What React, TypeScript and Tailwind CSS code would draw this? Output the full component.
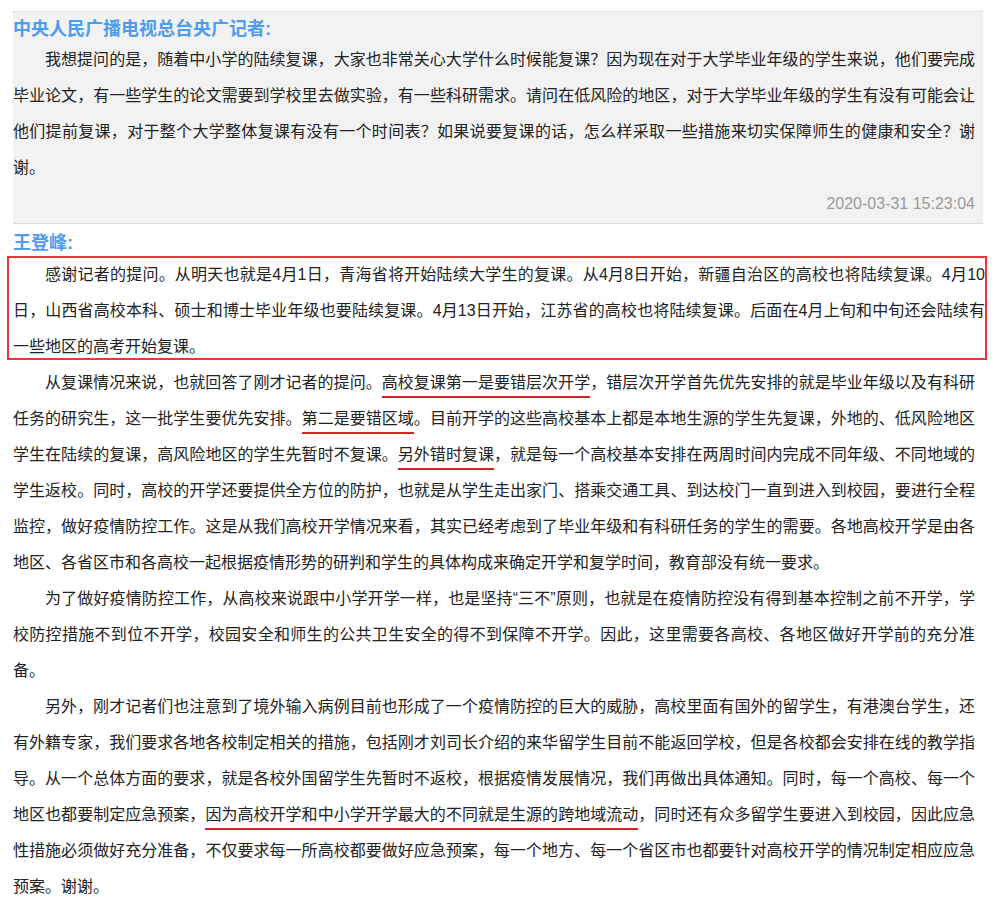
import * as React from 'react';

const U: React.FC<{ children: React.ReactNode }> = ({ children }) => (
  <span className="border-b-2 border-[#e02020] pb-[5px]">{children}</span>
);

const P: React.FC<{ children: React.ReactNode; className?: string }> = ({ children, className }) => (
  <p className={'indent-8 text-justify ' + (className ?? '')}>{children}</p>
);

export default function App() {
  return (
    <div
      className="w-[995px] bg-white px-[13px] pt-[11px] text-[16px] leading-[36px] text-[#222]"
      style={{ fontFamily: '"Liberation Sans", "Noto Sans CJK SC", sans-serif' }}
    >
      <div className="w-[970px] border-t border-dotted border-[#ccc] bg-[#f2f2f2] pb-[1px] pr-[8px]">
        <div className="pt-[4px] text-[18px] font-bold leading-[26px] text-[#4d9cf2]">中央人民广播电视总台央广记者:</div>
        <P>
          我想提问的是，随着中小学的陆续复课，大家也非常关心大学什么时候能复课？因为现在对于大学毕业年级的学生来说，他们要完成毕业论文，有一些学生的论文需要到学校里去做实验，有一些科研需求。请问在低风险的地区，对于大学毕业年级的学生有没有可能会让他们提前复课，对于整个大学整体复课有没有一个时间表？如果说要复课的话，怎么样采取一些措施来切实保障师生的健康和安全？谢谢。
        </P>
        <div className="text-right text-[16px] text-[#9a9a9a]">2020-03-31 15:23:04</div>
      </div>
      <div className="w-[970px] border-t border-[#ddd] pr-[8px]">
        <div className="pt-[6px] text-[18px] font-bold leading-[26px] text-[#4d9cf2]">王登峰:</div>
        <div className="-mx-[6px] -mr-[12px] h-[104px] border-2 border-[#ef3535] pl-[4px] pr-0">
          <P className="-mt-[1px]">
            感谢记者的提问。从明天也就是4月1日，青海省将开始陆续大学生的复课。从4月8日开始，新疆自治区的高校也将陆续复课。4月10日，山西省高校本科、硕士和博士毕业年级也要陆续复课。4月13日开始，江苏省的高校也将陆续复课。后面在4月上旬和中旬还会陆续有一些地区的高考开始复课。
          </P>
        </div>
        <P className="mt-[5px]">
          从复课情况来说，也就回答了刚才记者的提问。<U>高校复课第一是要错层次开学</U>，错层次开学首先优先安排的就是毕业年级以及有科研任务的研究生，这一批学生要优先安排。<U>第二是要错区域</U>。目前开学的这些高校基本上都是本地生源的学生先复课，外地的、低风险地区学生在陆续的复课，高风险地区的学生先暂时不复课。<U>另外错时复课</U>，就是每一个高校基本安排在两周时间内完成不同年级、不同地域的学生返校。同时，高校的开学还要提供全方位的防护，也就是从学生走出家门、搭乘交通工具、到达校门一直到进入到校园，要进行全程监控，做好疫情防控工作。这是从我们高校开学情况来看，其实已经考虑到了毕业年级和有科研任务的学生的需要。各地高校开学是由各地区、各省区市和各高校一起根据疫情形势的研判和学生的具体构成来确定开学和复学时间，教育部没有统一要求。
        </P>
        <P>
          为了做好疫情防控工作，从高校来说跟中小学开学一样，也是坚持“三不”原则，也就是在疫情防控没有得到基本控制之前不开学，学校防控措施不到位不开学，校园安全和师生的公共卫生安全的得不到保障不开学。因此，这里需要各高校、各地区做好开学前的充分准备。
        </P>
        <P>
          另外，刚才记者们也注意到了境外输入病例目前也形成了一个疫情防控的巨大的威胁，高校里面有国外的留学生，有港澳台学生，还有外籍专家，我们要求各地各校制定相关的措施，包括刚才刘司长介绍的来华留学生目前不能返回学校，但是各校都会安排在线的教学指导。从一个总体方面的要求，就是各校外国留学生先暂时不返校，根据疫情发展情况，我们再做出具体通知。同时，每一个高校、每一个地区也都要制定应急预案，<U>因为高校开学和中小学开学最大的不同就是生源的跨地域流动</U>，同时还有众多留学生要进入到校园，因此应急性措施必须做好充分准备，不仅要求每一所高校都要做好应急预案，每一个地方、每一个省区市也都要针对高校开学的情况制定相应应急预案。谢谢。
        </P>
      </div>
    </div>
  );
}
